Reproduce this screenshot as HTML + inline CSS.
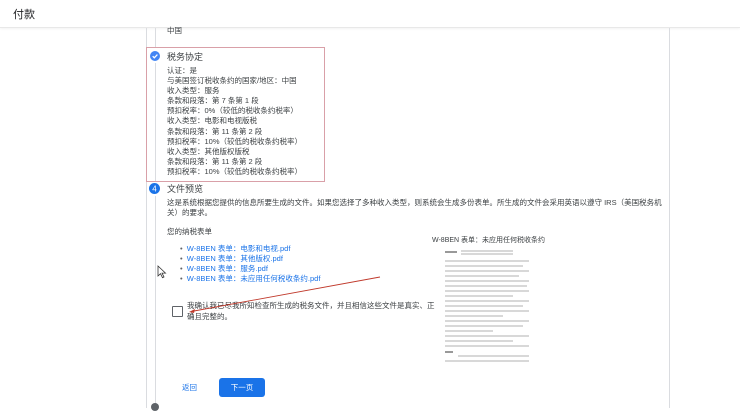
<!DOCTYPE html>
<html><head><meta charset="utf-8"><style>
body{margin:0;width:740px;height:406px;overflow:hidden;background:#fff;font-family:"Liberation Sans","Noto Sans CJK SC",sans-serif;color:#3c4043;position:relative}
.a{position:absolute;white-space:nowrap}
.s{font-size:7.5px;line-height:10.1px}
</style></head><body>
<div class="a" style="left:0;top:0;width:740px;height:27px;border-bottom:1px solid #e8e8e8;box-shadow:0 1px 2px rgba(0,0,0,.05)"></div>
<div class="a" style="left:13px;top:6px;font-size:11px;color:#202124">付款</div>
<div class="a" style="left:146px;top:28px;width:522px;height:380px;border-left:1px solid #dadce0;border-right:1px solid #dadce0"></div>
<div class="a" style="left:155px;top:28px;width:1px;height:20px;background:#dadce0"></div>
<div class="a" style="left:155px;top:63px;width:1px;height:118px;background:#dadce0"></div>
<div class="a" style="left:155px;top:196px;width:1px;height:210px;background:#dadce0"></div>
<div class="a s" style="left:167px;top:26px">中国</div>
<div class="a" style="left:146px;top:47px;width:177px;height:133px;border:1px solid #d9a0a8"></div>
<svg class="a" style="left:150px;top:51px" width="10" height="10"><circle cx="5" cy="5" r="5" fill="#4285f4"/><path d="M2.7 5.2l1.6 1.6 3.1-3.2" stroke="#fff" stroke-width="1.3" fill="none"/></svg>
<div class="a" style="left:167px;top:50px;font-size:9px">税务协定</div>
<div class="a s" style="left:167px;top:66px">认证：是<br>与美国签订税收条约的国家/地区：中国<br>收入类型：服务<br>条款和段落：第 7 条第 1 段<br>预扣税率：0%（较低的税收条约税率）<br>收入类型：电影和电视版税<br>条款和段落：第 11 条第 2 段<br>预扣税率：10%（较低的税收条约税率）<br>收入类型：其他版权版税<br>条款和段落：第 11 条第 2 段<br>预扣税率：10%（较低的税收条约税率）</div>
<svg class="a" style="left:149px;top:183px" width="11" height="11"><circle cx="5.5" cy="5.5" r="5.5" fill="#1a73e8"/><text x="5.5" y="8.5" font-size="8" fill="#fff" text-anchor="middle" font-family="Liberation Sans">4</text></svg>
<div class="a" style="left:167px;top:182px;font-size:9px">文件预览</div>
<div class="a s" style="left:167px;top:198px">这是系统根据您提供的信息所要生成的文件。如果您选择了多种收入类型，则系统会生成多份表单。所生成的文件会采用英语以遵守 IRS（美国税务机<br>关）的要求。</div>
<div class="a s" style="left:167px;top:227px">您的纳税表单</div>
<div class="a s" style="left:180px;top:244px;color:#1a73e8">
<span style="color:#5f6368">•</span>&nbsp; W-8BEN 表单：电影和电视.pdf<br><span style="color:#5f6368">•</span>&nbsp; W-8BEN 表单：其他版权.pdf<br><span style="color:#5f6368">•</span>&nbsp; W-8BEN 表单：服务.pdf<br><span style="color:#5f6368">•</span>&nbsp; W-8BEN 表单：未应用任何税收条约.pdf</div>
<div class="a s" style="left:432px;top:236px;font-size:7px">W-8BEN 表单：未应用任何税收条约</div>
<svg class="a" style="left:443px;top:249px" width="90" height="117">
<rect width="90" height="117" fill="#fff"/>
<g stroke="#999" stroke-width="0.8">
<line x1="2" y1="3" x2="14" y2="3" stroke-width="2"/><line x1="18" y1="2" x2="70" y2="2"/><line x1="18" y1="5" x2="70" y2="5"/>
<line x1="2" y1="12" x2="86" y2="12"/><line x1="2" y1="17" x2="80" y2="17"/><line x1="2" y1="22" x2="86" y2="22"/><line x1="2" y1="27" x2="76" y2="27"/><line x1="2" y1="32" x2="86" y2="32"/><line x1="2" y1="37" x2="84" y2="37"/><line x1="2" y1="42" x2="86" y2="42"/><line x1="2" y1="47" x2="70" y2="47"/><line x1="2" y1="52" x2="86" y2="52"/><line x1="2" y1="57" x2="80" y2="57"/><line x1="2" y1="62" x2="86" y2="62"/><line x1="2" y1="67" x2="60" y2="67"/><line x1="2" y1="72" x2="86" y2="72"/><line x1="2" y1="77" x2="80" y2="77"/><line x1="2" y1="82" x2="50" y2="82"/><line x1="2" y1="87" x2="86" y2="87"/><line x1="2" y1="92" x2="70" y2="92"/><line x1="2" y1="97" x2="86" y2="97"/><line x1="2" y1="103" x2="10" y2="103" stroke-width="2"/><line x1="15" y1="107" x2="86" y2="107"/><line x1="2" y1="112" x2="86" y2="112"/>
</g></svg>
<svg class="a" style="left:157px;top:265px" width="10" height="14"><path d="M1 1v10l2.5-2.3 2 4 1.5-.8-2-3.8h3.5z" fill="#fff" stroke="#333" stroke-width="0.8"/></svg>
<div class="a" style="left:172px;top:306px;width:9px;height:9px;border:1.2px solid #5f6368;border-radius:1px"></div>
<div class="a s" style="left:187px;top:300px;line-height:11px">我确认我已尽我所知检查所生成的税务文件，并且相信这些文件是真实、正<br>确且完整的。</div>
<svg class="a" style="left:0;top:0" width="740" height="406"><line x1="380" y1="277" x2="194" y2="311" stroke="#c0392b" stroke-width="0.9"/><path d="M189 312l6-3-1 4z" fill="#c0392b"/></svg>
<div class="a s" style="left:182px;top:383px;color:#1a73e8">返回</div>
<div class="a" style="left:219px;top:378px;width:46px;height:19px;background:#1a73e8;border-radius:3px;color:#fff;font-size:7.5px;line-height:19px;text-align:center">下一页</div>
<div class="a" style="left:151px;top:403px;width:8px;height:8px;border-radius:50%;background:#5f6368"></div>
</body></html>
